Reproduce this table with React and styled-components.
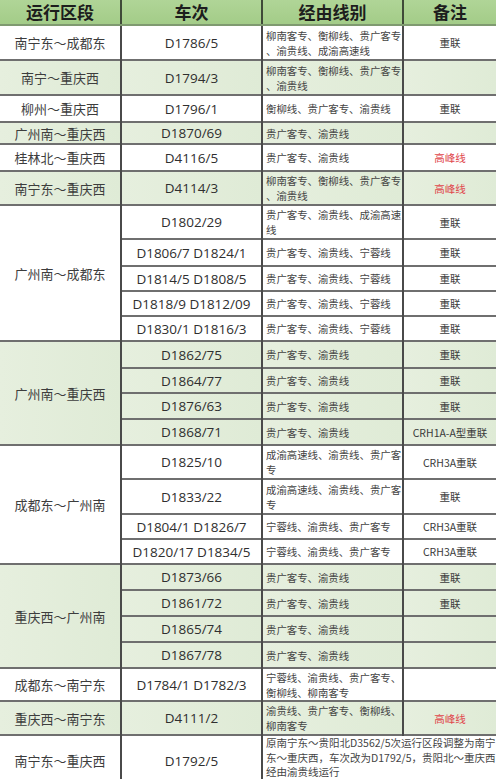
import React from "react";
import styled, { createGlobalStyle } from "styled-components";

const GlobalStyle = createGlobalStyle`
  html, body {
    margin: 0;
    padding: 0;
    background: #ffffff;
  }
  body {
    font-family: "Noto Sans CJK SC", "Noto Sans", sans-serif;
    color: #333;
  }
`;

const Sheet = styled.table`
  width: 496px;
  border-collapse: collapse;
  table-layout: fixed;
`;

const HeadCell = styled.th`
  height: 24px;
  padding: 0;
  background: linear-gradient(#b0d597, #a3cc88);
  color: #1d1d1d;
  font-size: 17px;
  font-weight: 700;
  line-height: 22px;
  text-align: center;
  border-left: 2px solid #3f4a38;
  border-bottom: 2px solid #7f9a70;
  &:first-child {
    border-left: none;
  }
`;

const Row = styled.tr`
  height: ${(p) => p.$h}px;
`;

const Cell = styled.td`
  padding: 0;
  background: ${(p) =>
    p.$green ? "linear-gradient(90deg, #e6efde, #dfebd6)" : "#ffffff"};
  border-top: 2px solid #6f6f6f;
  border-left: 2px solid #4a4a4a;
  vertical-align: middle;
`;

const RouteCell = styled(Cell)`
  border-left: none;
  text-align: center;
  font-size: 13px;
  color: #3d3d3d;
  white-space: nowrap;
`;

const TrainCell = styled(Cell)`
  text-align: center;
  font-family: "Open Sans", "Noto Sans CJK SC", sans-serif;
  font-size: 13.5px;
  color: #2f2f2f;
  white-space: nowrap;
`;

const LineCell = styled(Cell)`
  padding-left: 3px;
  font-size: 10.4px;
  line-height: 15px;
  color: #444;
  white-space: nowrap;
`;

const NoticeCell = styled(Cell)`
  padding: 0 0 0 3px;
  vertical-align: top;
  font-size: 10.5px;
  line-height: 14.5px;
  color: #444;
  white-space: nowrap;
  overflow: hidden;
`;

const NoteCell = styled(Cell)`
  text-align: center;
  font-size: 10.5px;
  color: ${(p) => (p.$red ? "#e0454a" : "#3a3a3a")};
  white-space: nowrap;
`;

const GG = ["贵广客专、渝贵线"];
const GGN = ["贵广客专、渝贵线、宁蓉线"];

const groups = [
  { route: "南宁东～成都东", rows: [{ train: "D1786/5", lines: ["柳南客专、衡柳线、贵广客专", "、渝贵线、成渝高速线"], note: "重联", h: 35 }] },
  { route: "南宁～重庆西", green: true, rows: [{ train: "D1794/3", lines: ["柳南客专、衡柳线、贵广客专", "、渝贵线"], note: "", h: 35 }] },
  { route: "柳州～重庆西", rows: [{ train: "D1796/1", lines: ["衡柳线、贵广客专、渝贵线"], note: "重联", h: 27 }] },
  { route: "广州南～重庆西", green: true, rows: [{ train: "D1870/69", lines: GG, note: "", h: 22 }] },
  { route: "桂林北～重庆西", rows: [{ train: "D4116/5", lines: GG, note: "高峰线", red: true, h: 27 }] },
  { route: "南宁东～重庆西", green: true, rows: [{ train: "D4114/3", lines: ["柳南客专、衡柳线、贵广客专", "、渝贵线"], note: "高峰线", red: true, h: 34 }] },
  {
    route: "广州南～成都东",
    rows: [
      { train: "D1802/29", lines: ["贵广客专、渝贵线、成渝高速", "线"], note: "重联", h: 34 },
      { train: "D1806/7 D1824/1", lines: GGN, note: "重联", h: 27 },
      { train: "D1814/5 D1808/5", lines: GGN, note: "重联", h: 25 },
      { train: "D1818/9 D1812/09", lines: GGN, note: "重联", h: 25 },
      { train: "D1830/1 D1816/3", lines: GGN, note: "重联", h: 25 },
    ],
  },
  {
    route: "广州南～重庆西",
    green: true,
    rows: [
      { train: "D1862/75", lines: GG, note: "重联", h: 27 },
      { train: "D1864/77", lines: GG, note: "重联", h: 25 },
      { train: "D1876/63", lines: GG, note: "重联", h: 26 },
      { train: "D1868/71", lines: GG, note: "CRH1A-A型重联", h: 26 },
    ],
  },
  {
    route: "成都东～广州南",
    rows: [
      { train: "D1825/10", lines: ["成渝高速线、渝贵线、贵广客", "专"], note: "CRH3A重联", h: 34 },
      { train: "D1833/22", lines: ["成渝高速线、渝贵线、贵广客", "专"], note: "重联", h: 35 },
      { train: "D1804/1 D1826/7", lines: ["宁蓉线、渝贵线、贵广客专"], note: "CRH3A重联", h: 25 },
      { train: "D1820/17 D1834/5", lines: ["宁蓉线、渝贵线、贵广客专"], note: "CRH3A重联", h: 25 },
    ],
  },
  {
    route: "重庆西～广州南",
    green: true,
    rows: [
      { train: "D1873/66", lines: GG, note: "重联", h: 26 },
      { train: "D1861/72", lines: GG, note: "重联", h: 26 },
      { train: "D1865/74", lines: GG, note: "", h: 26 },
      { train: "D1867/78", lines: GG, note: "", h: 26 },
    ],
  },
  { route: "成都东～南宁东", rows: [{ train: "D1784/1 D1782/3", lines: ["宁蓉线、渝贵线、贵广客专、", "衡柳线、柳南客专"], note: "", h: 33 }] },
  { route: "重庆西～南宁东", green: true, rows: [{ train: "D4111/2", lines: ["渝贵线、贵广客专、衡柳线、", "柳南客专"], note: "高峰线", red: true, h: 34 }] },
];

const notice = [
  "原南宁东～贵阳北D3562/5次运行区段调整为南宁",
  "东～重庆西，车次改为D1792/5，贵阳北～重庆西",
  "经由渝贵线运行",
];

function Lines({ items }) {
  return items.map((t, i) => (
    <React.Fragment key={i}>
      {i > 0 && <br />}
      {t}
    </React.Fragment>
  ));
}

export default function App() {
  return (
    <>
      <GlobalStyle />
      <Sheet>
        <colgroup>
          <col style={{ width: 121 }} />
          <col style={{ width: 141 }} />
          <col style={{ width: 141 }} />
          <col style={{ width: 93 }} />
        </colgroup>
        <thead>
          <tr>
            <HeadCell>运行区段</HeadCell>
            <HeadCell>车次</HeadCell>
            <HeadCell>经由线别</HeadCell>
            <HeadCell>备注</HeadCell>
          </tr>
        </thead>
        <tbody>
          {groups.map((g, gi) =>
            g.rows.map((r, ri) => (
              <Row key={`${gi}-${ri}`} $h={r.h}>
                {ri === 0 && (
                  <RouteCell rowSpan={g.rows.length} $green={g.green}>
                    {g.route}
                  </RouteCell>
                )}
                <TrainCell $green={g.green}>{r.train}</TrainCell>
                <LineCell $green={g.green}>
                  <Lines items={r.lines} />
                </LineCell>
                <NoteCell $green={g.green} $red={r.red}>
                  {r.note}
                </NoteCell>
              </Row>
            ))
          )}
          <Row $h={50}>
            <RouteCell>南宁东～重庆西</RouteCell>
            <TrainCell>D1792/5</TrainCell>
            <NoticeCell colSpan={2}>
              <Lines items={notice} />
            </NoticeCell>
          </Row>
        </tbody>
      </Sheet>
    </>
  );
}
